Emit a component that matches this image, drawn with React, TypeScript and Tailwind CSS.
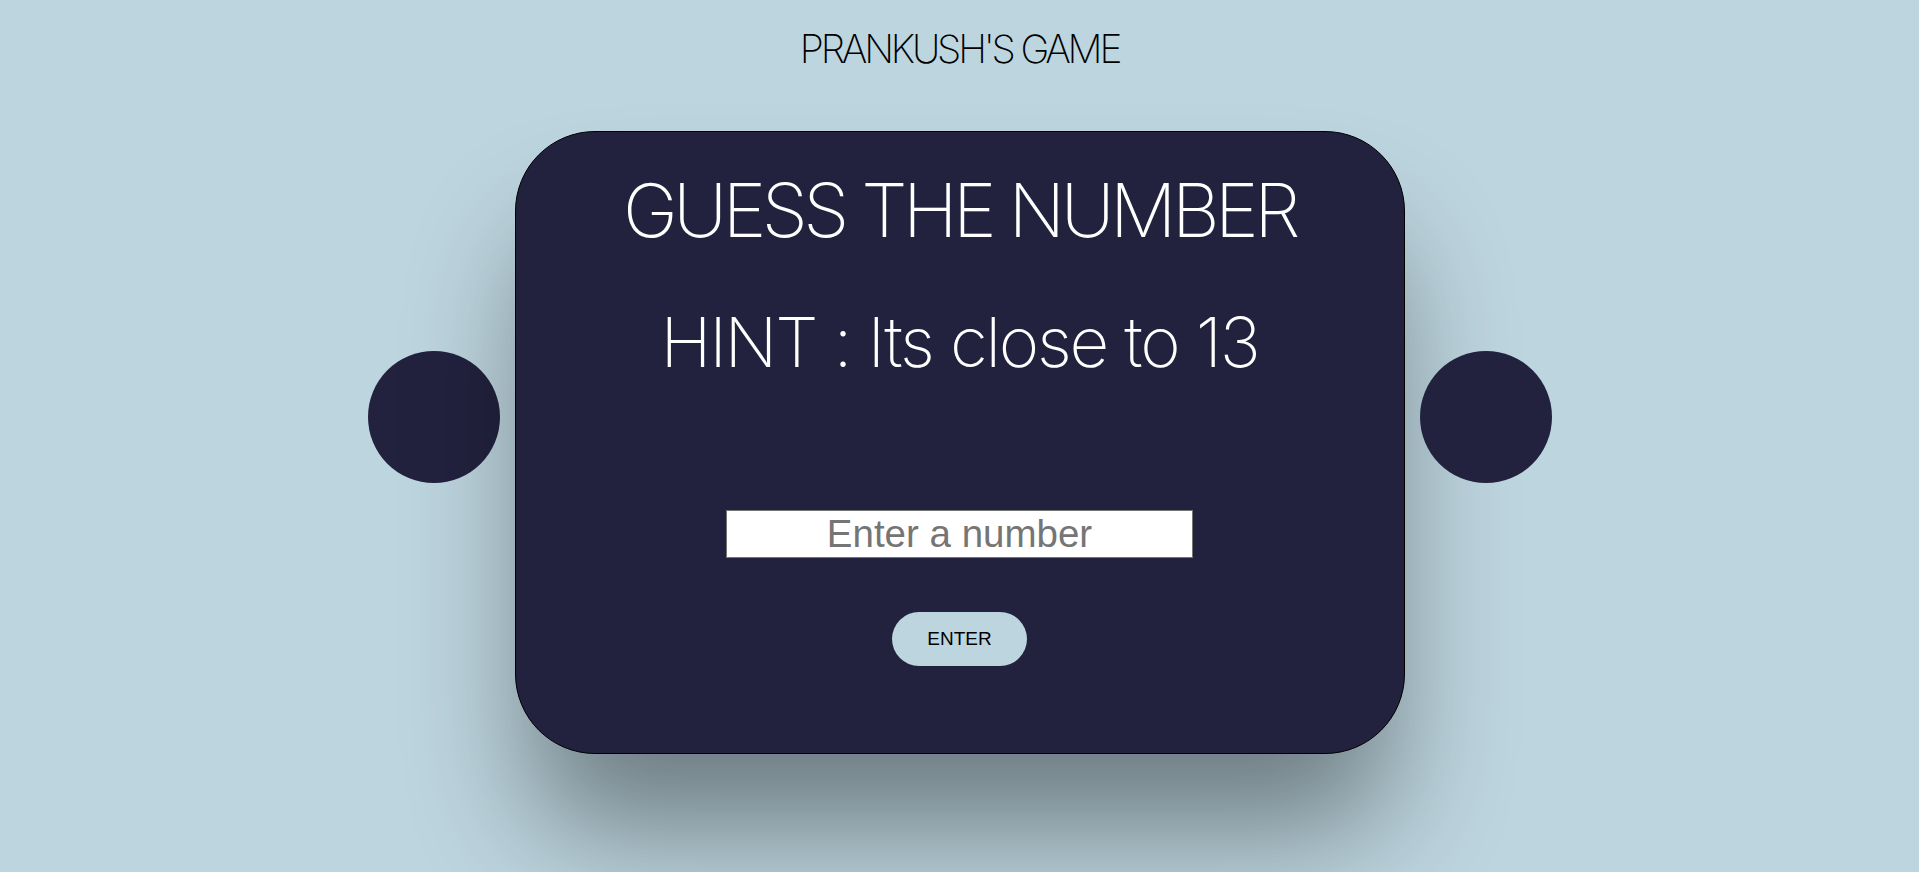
import React from "react";

export default function App() {
  return (
    <div className="min-h-screen bg-[#bdd5df] flex flex-col items-center font-['Inter',sans-serif] overflow-hidden">
      <h1 className="mt-[29px] text-[39px] font-extralight leading-none text-black tracking-[-3.2px]">
        PRANKUSH'S GAME
      </h1>
      <div className="mt-[63px] flex items-start gap-[15px]">
        <div className="mt-[220px] w-[132px] h-[132px] rounded-full bg-[#22223f]" />
        <div className="w-[890px] h-[623px] rounded-[80px] border border-black bg-[#22223f] shadow-[0_90px_120px_-15px_rgba(0,0,0,0.42)] flex flex-col items-center">
          <h2 className="mt-[41px] text-[74px] font-extralight leading-none text-white tracking-[-4.5px]">
            GUESS THE NUMBER
          </h2>
          <p className="mt-[61px] text-[69px] font-extralight leading-none text-white tracking-[-2.2px]">
            HINT : Its close to 13
          </p>
          <input
            type="text"
            placeholder="Enter a number"
            className="mt-[133px] w-[467px] h-[48px] bg-white border border-[#767676] text-center text-[38.5px] font-['Liberation_Sans',Arial,sans-serif] placeholder:text-[#757575] outline-none"
          />
          <button className="mt-[54px] w-[135px] h-[54px] rounded-full bg-[#bdd5df] text-[19px] text-black font-['Liberation_Sans',Arial,sans-serif]">
            ENTER
          </button>
        </div>
        <div className="mt-[220px] w-[132px] h-[132px] rounded-full bg-[#22223f]" />
      </div>
    </div>
  );
}
